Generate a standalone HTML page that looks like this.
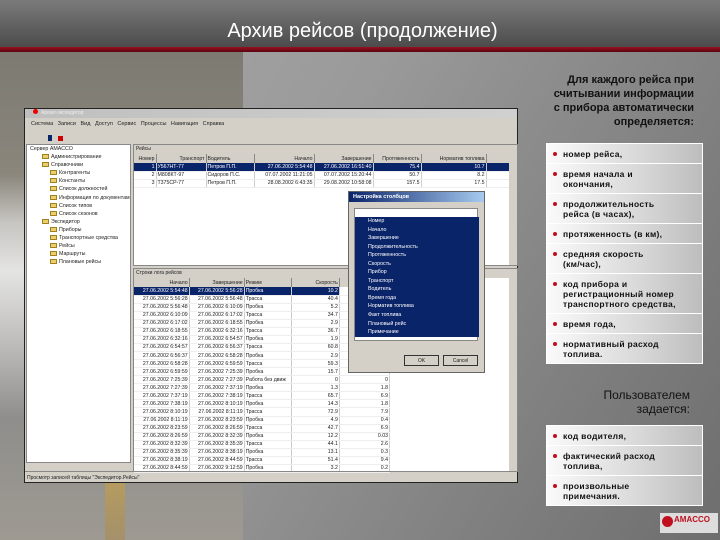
<!DOCTYPE html>
<html><head><meta charset="utf-8"><style>
*{margin:0;padding:0;box-sizing:border-box}
body{width:720px;height:540px;overflow:hidden;position:relative;background:linear-gradient(120deg,#a9a9a9 0%,#9a9a9a 40%,#6e6e6e 100%);font-family:"Liberation Sans",sans-serif}
.hdr{position:absolute;left:0;top:0;width:720px;height:48px;background:linear-gradient(#7a7a7a,#5e5e5e 60%,#4a4a4a);color:#fff;font-size:20px;text-align:center;line-height:24px;padding-top:19px;padding-left:5px}
.red{position:absolute;left:0;top:47px;width:720px;height:5px;background:linear-gradient(#9b1020,#5a0510)}
.photo{position:absolute;left:0;top:52px;width:243px;height:488px;background:linear-gradient(#7d7a72 0%,#8a867c 25%,#c7c5c2 35%,#e4e4e2 45%,#bdbcba 60%,#8f8e8c 75%,#9e9a92 100%)}
.road{position:absolute;left:105px;top:483px;width:20px;height:57px;background:linear-gradient(#c8a040,#a88a50);opacity:.6}
.win{position:absolute;left:24px;top:108px;width:494px;height:375px;background:#d4d0c8;border:1px solid #222;font-size:5px;color:#222}
.tb{height:9px;background:linear-gradient(90deg,#bfbfbf,#d0d0d0);color:#eee;font-size:5px;padding-left:8px;line-height:9px}
.menu{height:13px;line-height:13px;padding-left:6px;font-size:5.5px;word-spacing:3px}
.tool{height:13px}
.tree{position:absolute;left:1px;top:35px;width:105px;height:319px;background:#fff;border:1px solid #888;font-size:5.3px;line-height:8.1px;padding:0 0 0 15px}
.tree div{white-space:nowrap}
.tree i{display:inline-block;width:7px;height:5px;background:#e8d06a;border:1px solid #a08020;margin-right:2px;vertical-align:-1px}
.p1{position:absolute;left:108px;top:35px;width:385px;height:122px;background:#fff;border:1px solid #888}
.p2{position:absolute;left:108px;top:159px;width:385px;height:204px;background:#fff;border:1px solid #888}
.cap{height:9px;background:#d4d0c8;line-height:9px;padding-left:2px}
table{border-collapse:collapse;font-size:5.2px}
td{height:8.07px;padding:0 1px;white-space:nowrap;border-right:1px solid #ccc;border-bottom:1px solid #eee}
th{height:9px;font-weight:normal;background:#d4d0c8;border-right:1px solid #888;text-align:right;padding:0 1px}
.r{text-align:right}
.sel td{background:#0a246a;color:#fff}
.status{position:absolute;left:0;top:362px;width:494px;height:12px;border-top:1px solid #888;line-height:12px;padding-left:2px}
.dlg{position:absolute;left:323px;top:82px;width:137px;height:182px;background:#d4d0c8;border:1px solid #666}
.dlg .t{height:10px;background:linear-gradient(90deg,#0a246a,#a6caf0);color:#fff;font-size:5.5px;line-height:10px;padding-left:4px;font-weight:bold}
.lst{position:absolute;left:5px;top:16px;width:124px;height:133px;background:#fff;border:1px solid #888}
.lst .b{position:absolute;left:0;top:8px;width:124px;height:120px;background:#0a246a;color:#fff;font-size:5.3px;line-height:8.55px;padding-left:13px}
.btn{position:absolute;top:163px;width:35px;height:11px;border:1px solid #333;background:#d4d0c8;text-align:center;line-height:10px}
.sb{position:absolute;right:0;width:8px;background:#d4d0c8}
.txt{position:absolute;color:#111;font-size:11px;font-weight:bold;text-align:right;line-height:14px;white-space:nowrap}
.box{position:absolute;left:546px;width:157px;border:1px solid #fff;background:#fff}
.it{background:linear-gradient(90deg,#fafafa,#d8d8d8 60%,#bdbdbd);font-size:8.5px;font-weight:bold;color:#111;padding:4.5px 4px 4.5px 16px;line-height:10px;position:relative;margin-bottom:1px;white-space:nowrap;letter-spacing:.3px}
.it:last-child{margin-bottom:0}
.it:before{content:"";position:absolute;left:6px;top:8px;width:4px;height:4px;border-radius:50%;background:#c01020}
.logo{position:absolute;left:660px;top:513px;width:58px;height:20px;background:#ddd;font-size:8px;color:#c01020;font-weight:bold;line-height:14px;padding-left:14px}
.logo:before{content:"";position:absolute;left:2px;top:3px;width:11px;height:11px;border-radius:50%;background:#c01020}
</style></head><body>
<div class="hdr">Архив рейсов (продолжение)</div>
<div class="red"></div>
<div class="photo"></div>
<div class="road"></div>

<div class="win">
<div class="tb"><span style="display:inline-block;width:5px;height:5px;background:#e00;border-radius:50%;margin-right:3px"></span>Ареал-экспедитор</div>
<div class="menu">Система Записи Вид Доступ Сервис Процессы Навигация Справка</div>
<div class="tool"><span style="display:inline-block;margin-left:23px;width:4px;height:6px;background:#0a246a;margin-top:4px"></span><span style="display:inline-block;margin-left:6px;width:5px;height:5px;background:#c00"></span></div>
<div class="tree">
<div style="margin-left:-12px">Сервер АМАССО</div>
<div><i></i>Администрирование</div>
<div><i></i>Справочники</div>
<div style="padding-left:8px"><i></i>Контрагенты</div>
<div style="padding-left:8px"><i></i>Константы</div>
<div style="padding-left:8px"><i></i>Список должностей</div>
<div style="padding-left:8px"><i></i>Информация по документам</div>
<div style="padding-left:8px"><i></i>Список типов</div>
<div style="padding-left:8px"><i></i>Список сезонов</div>
<div><i></i>Экспедитор</div>
<div style="padding-left:8px"><i></i>Приборы</div>
<div style="padding-left:8px"><i></i>Транспортные средства</div>
<div style="padding-left:8px"><i></i>Рейсы</div>
<div style="padding-left:8px"><i></i>Маршруты</div>
<div style="padding-left:8px"><i></i>Плановые рейсы</div>
</div>
<div class="p1"><div class="cap">Рейсы</div>
<table style="width:377px"><tr><th style="width:22px">Номер</th><th style="width:50px">Транспорт</th><th style="width:48px;text-align:left">Водитель</th><th style="width:60px">Начало</th><th style="width:59px">Завершение</th><th style="width:48px">Протяженность</th><th style="width:65px">Норматив топлива</th><th></th></tr>
<tr class="sel"><td class="r">1</td><td>У567НТ-77</td><td>Петров П.П.</td><td class="r">27.06.2002 5:54:48</td><td class="r">27.06.2002 16:51:40</td><td class="r">75.4</td><td class="r">10.7</td><td></td></tr>
<tr><td class="r">2</td><td>М808КТ-97</td><td>Сидоров П.С.</td><td class="r">07.07.2002 11:21:05</td><td class="r">07.07.2002 15:20:44</td><td class="r">50.7</td><td class="r">8.2</td><td></td></tr>
<tr><td class="r">3</td><td>Т375СР-77</td><td>Петров П.П.</td><td class="r">28.08.2002 6:43:35</td><td class="r">29.08.2002 10:58:08</td><td class="r">157.5</td><td class="r">17.5</td><td></td></tr>
</table>
<div class="sb" style="top:0;height:120px"></div></div>
<div class="p2"><div class="cap">Строки лога рейсов</div>
<table style="width:256px"><tr><th style="width:55px">Начало</th><th style="width:55px">Завершение</th><th style="width:47px;text-align:left">Режим</th><th style="width:48px">Скорость</th><th style="width:50px"></th></tr>
<tr class="sel"><td class="r">27.06.2002 5:54:48</td><td class="r">27.06.2002 5:56:28</td><td>Пробка</td><td class="r">10.2</td><td style="background:#fff"></td></tr>
<tr><td class="r">27.06.2002 5:56:28</td><td class="r">27.06.2002 5:56:48</td><td>Трасса</td><td class="r">40.4</td><td></td></tr>
<tr><td class="r">27.06.2002 5:56:48</td><td class="r">27.06.2002 6:10:09</td><td>Пробка</td><td class="r">5.2</td><td></td></tr>
<tr><td class="r">27.06.2002 6:10:09</td><td class="r">27.06.2002 6:17:02</td><td>Трасса</td><td class="r">34.7</td><td></td></tr>
<tr><td class="r">27.06.2002 6:17:02</td><td class="r">27.06.2002 6:18:55</td><td>Пробка</td><td class="r">2.9</td><td></td></tr>
<tr><td class="r">27.06.2002 6:18:55</td><td class="r">27.06.2002 6:32:16</td><td>Трасса</td><td class="r">36.7</td><td></td></tr>
<tr><td class="r">27.06.2002 6:32:16</td><td class="r">27.06.2002 6:54:57</td><td>Пробка</td><td class="r">1.9</td><td></td></tr>
<tr><td class="r">27.06.2002 6:54:57</td><td class="r">27.06.2002 6:56:37</td><td>Трасса</td><td class="r">60.8</td><td></td></tr>
<tr><td class="r">27.06.2002 6:56:37</td><td class="r">27.06.2002 6:58:28</td><td>Пробка</td><td class="r">2.9</td><td></td></tr>
<tr><td class="r">27.06.2002 6:58:28</td><td class="r">27.06.2002 6:59:59</td><td>Трасса</td><td class="r">59.3</td><td></td></tr>
<tr><td class="r">27.06.2002 6:59:59</td><td class="r">27.06.2002 7:25:39</td><td>Пробка</td><td class="r">15.7</td><td></td></tr>
<tr><td class="r">27.06.2002 7:25:39</td><td class="r">27.06.2002 7:27:39</td><td>Работа без движ</td><td class="r">0</td><td class="r">0</td></tr>
<tr><td class="r">27.06.2002 7:27:39</td><td class="r">27.06.2002 7:37:19</td><td>Пробка</td><td class="r">1.3</td><td class="r">1.8</td></tr>
<tr><td class="r">27.06.2002 7:37:19</td><td class="r">27.06.2002 7:38:19</td><td>Трасса</td><td class="r">65.7</td><td class="r">6.9</td></tr>
<tr><td class="r">27.06.2002 7:38:19</td><td class="r">27.06.2002 8:10:19</td><td>Пробка</td><td class="r">14.3</td><td class="r">1.8</td></tr>
<tr><td class="r">27.06.2002 8:10:19</td><td class="r">27.06.2002 8:11:19</td><td>Трасса</td><td class="r">72.9</td><td class="r">7.9</td></tr>
<tr><td class="r">27.06.2002 8:11:19</td><td class="r">27.06.2002 8:23:59</td><td>Пробка</td><td class="r">4.9</td><td class="r">0.4</td></tr>
<tr><td class="r">27.06.2002 8:23:59</td><td class="r">27.06.2002 8:26:59</td><td>Трасса</td><td class="r">42.7</td><td class="r">6.9</td></tr>
<tr><td class="r">27.06.2002 8:26:59</td><td class="r">27.06.2002 8:32:39</td><td>Пробка</td><td class="r">12.2</td><td class="r">0.03</td></tr>
<tr><td class="r">27.06.2002 8:32:39</td><td class="r">27.06.2002 8:35:39</td><td>Трасса</td><td class="r">44.1</td><td class="r">2.6</td></tr>
<tr><td class="r">27.06.2002 8:35:39</td><td class="r">27.06.2002 8:38:19</td><td>Пробка</td><td class="r">13.1</td><td class="r">0.3</td></tr>
<tr><td class="r">27.06.2002 8:38:19</td><td class="r">27.06.2002 8:44:59</td><td>Трасса</td><td class="r">51.4</td><td class="r">9.4</td></tr>
<tr><td class="r">27.06.2002 8:44:59</td><td class="r">27.06.2002 9:12:59</td><td>Пробка</td><td class="r">3.2</td><td class="r">0.2</td></tr>
</table>
<div class="sb" style="top:0;height:202px"></div></div>
<div class="status">Просмотр записей таблицы "Экспедитор.Рейсы"</div>
<div class="dlg"><div class="t">Настройка столбцов</div>
<div class="lst"><div class="b">Номер<br>Начало<br>Завершение<br>Продолжительность<br>Протяженность<br>Скорость<br>Прибор<br>Транспорт<br>Водитель<br>Время года<br>Норматив топлива<br>Факт топлива<br>Плановый рейс<br>Примечание</div></div>
<div class="btn" style="left:55px">OK</div><div class="btn" style="left:94px">Cancel</div>
</div>
</div>

<div class="txt" style="left:494px;top:73px;width:200px">Для каждого рейса при<br>считывании информации<br>с прибора автоматически<br>определяется:</div>
<div class="box" style="top:143px">
<div class="it">номер рейса,</div>
<div class="it">время начала и<br>окончания,</div>
<div class="it">продолжительность<br>рейса (в часах),</div>
<div class="it">протяженность (в км),</div>
<div class="it">средняя скорость<br>(км/час),</div>
<div class="it">код прибора и<br>регистрационный номер<br>транспортного средства,</div>
<div class="it">время года,</div>
<div class="it">нормативный расход<br>топлива.</div>
</div>
<div class="txt" style="left:560px;top:388px;width:130px;font-weight:normal;font-size:12px">Пользователем<br>задается:</div>
<div class="box" style="top:425px">
<div class="it">код водителя,</div>
<div class="it">фактический расход<br>топлива,</div>
<div class="it">произвольные<br>примечания.</div>
</div>
<div class="logo">AMACCO</div>
</body></html>
